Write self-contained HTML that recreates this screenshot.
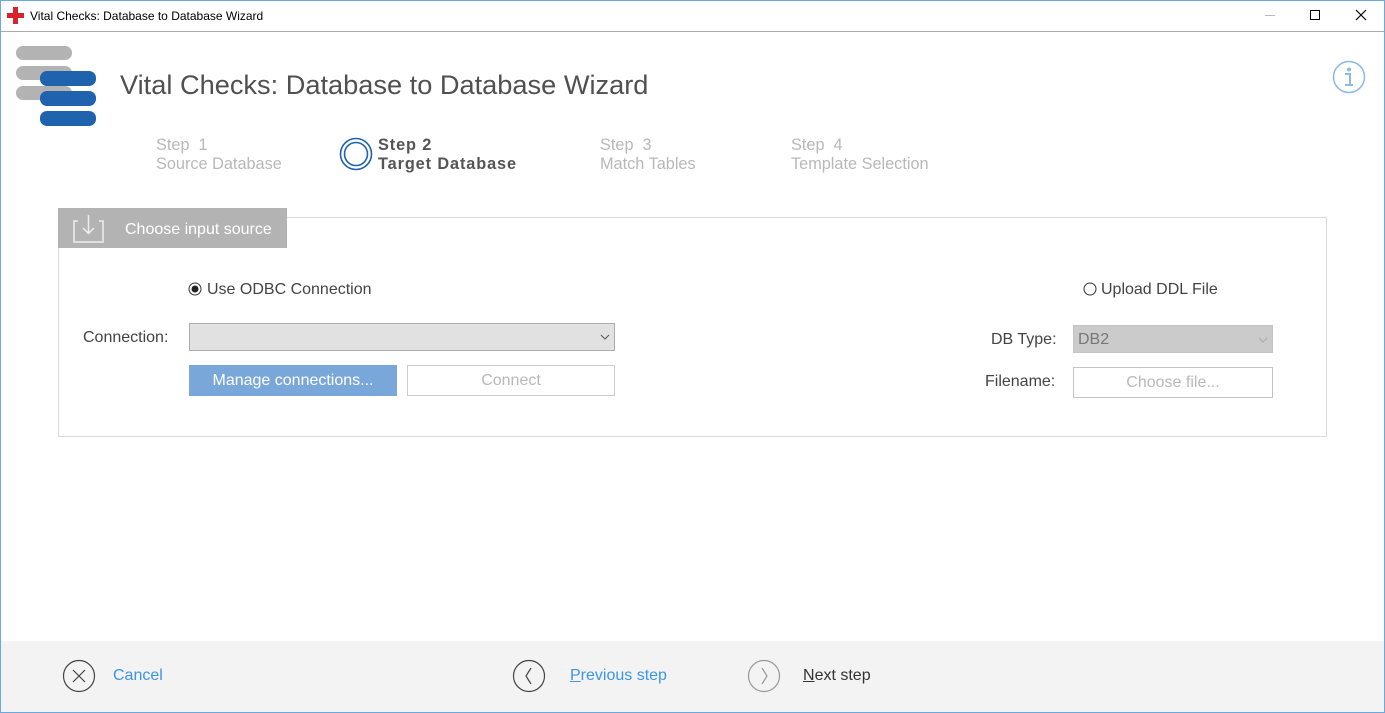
<!DOCTYPE html>
<html><head><meta charset="utf-8"><style>
*{margin:0;padding:0;box-sizing:border-box}
body{width:1385px;height:713px;position:relative;overflow:hidden;background:#fff;font-family:"Liberation Sans",Arial,sans-serif;}
.a{position:absolute;white-space:nowrap}
</style></head><body>
<div class="a" style="left:0;top:0;width:1385px;height:713px;border:1px solid #6aa8e0"></div>
<div class="a" style="left:1px;top:31px;width:1383px;height:1px;background:#ababab"></div>
<svg class="a" style="left:7px;top:7px" width="17" height="17"><rect x="6" y="0" width="5" height="17" fill="#d8232a"/><rect x="0" y="6" width="17" height="5" fill="#d8232a"/></svg>
<div class="a" style="left:30px;top:9px;font-size:12px;color:#000">Vital Checks: Database to Database Wizard</div>
<div class="a" style="left:1265px;top:15px;width:10px;height:1px;background:#bbb"></div>
<div class="a" style="left:1310px;top:10px;width:10px;height:10px;border:1px solid #000"></div>
<svg class="a" style="left:1355px;top:9px" width="12" height="12"><path d="M1 1L11 11M11 1L1 11" stroke="#000" stroke-width="1.2"/></svg>

<div class="a" style="left:16px;top:46px;width:56px;height:14px;border-radius:7px;background:#b3b3b3"></div>
<div class="a" style="left:16px;top:66px;width:56px;height:14px;border-radius:7px;background:#b3b3b3"></div>
<div class="a" style="left:16px;top:86px;width:56px;height:14px;border-radius:7px;background:#b3b3b3"></div>
<div class="a" style="left:40px;top:71px;width:56px;height:15px;border-radius:7px;background:#1f62ad"></div>
<div class="a" style="left:40px;top:91px;width:56px;height:15px;border-radius:7px;background:#1f62ad"></div>
<div class="a" style="left:40px;top:111px;width:56px;height:15px;border-radius:7px;background:#1f62ad"></div>
<div class="a" style="left:120px;top:69px;font-size:27.2px;color:#505050">Vital Checks: Database to Database Wizard</div>
<svg class="a" style="left:1332px;top:60px" width="34" height="34"><circle cx="17" cy="17" r="15.5" fill="none" stroke="#8ab9e6" stroke-width="1.5"/><circle cx="17" cy="9.5" r="2" fill="#8ab9e6"/><path d="M13 14h5v11h2M13 25h8" stroke="#8ab9e6" stroke-width="2" fill="none"/></svg>

<div class="a" style="left:156px;top:136px;font-size:16.3px;line-height:19px;color:#b8b8b8">Step&nbsp; 1<br>Source Database</div>
<svg class="a" style="left:339px;top:137px" width="34" height="34"><circle cx="17" cy="17" r="15.5" fill="none" stroke="#1f62ad" stroke-width="1.6"/><circle cx="17" cy="17" r="11.5" fill="none" stroke="#1f62ad" stroke-width="1.6"/></svg>
<div class="a" style="left:378px;top:136px;font-size:16.3px;line-height:19px;color:#555;font-weight:bold;letter-spacing:0.9px">Step 2<br>Target Database</div>
<div class="a" style="left:600px;top:136px;font-size:16.3px;line-height:19px;color:#b8b8b8">Step&nbsp; 3<br>Match Tables</div>
<div class="a" style="left:791px;top:136px;font-size:16.3px;line-height:19px;color:#b8b8b8">Step&nbsp; 4<br>Template Selection</div>

<div class="a" style="left:58px;top:217px;width:1269px;height:220px;border:1px solid #dadada"></div>
<div class="a" style="left:58px;top:208px;width:229px;height:40px;background:#b3b3b3"></div>
<svg class="a" style="left:72px;top:212px" width="34" height="32"><path d="M6 9H2V30H31V9H27" fill="none" stroke="#eee" stroke-width="1.5"/><path d="M16.5 3V21M11 16l5.5 5.5L22 16" fill="none" stroke="#eee" stroke-width="1.5"/></svg>
<div class="a" style="left:125px;top:221px;font-size:16px;color:#fff">Choose input source</div>

<svg class="a" style="left:188px;top:282px" width="14" height="14"><circle cx="7" cy="7" r="6" fill="#fff" stroke="#333"/><circle cx="7" cy="7" r="3.5" fill="#222"/></svg>
<div class="a" style="left:207px;top:281px;font-size:16px;color:#444">Use ODBC Connection</div>
<div class="a" style="left:83px;top:329px;font-size:16px;color:#444">Connection:</div>
<div class="a" style="left:189px;top:323px;width:426px;height:28px;background:#e1e1e1;border:1px solid #adadad"></div>
<svg class="a" style="left:600px;top:334px" width="10" height="6"><path d="M1 1l4 4 4-4" fill="none" stroke="#555"/></svg>
<div class="a" style="left:189px;top:365px;width:208px;height:31px;background:#7aa7d9;color:#fff;font-size:16px;text-align:center;line-height:32px">Manage connections...</div>
<div class="a" style="left:407px;top:365px;width:208px;height:31px;border:1px solid #ccc;color:#b8b8b8;font-size:16px;text-align:center;line-height:30px">Connect</div>

<svg class="a" style="left:1083px;top:282px" width="14" height="14"><circle cx="7" cy="7" r="6" fill="#fff" stroke="#333"/></svg>
<div class="a" style="left:1101px;top:281px;font-size:16px;color:#444">Upload DDL File</div>
<div class="a" style="left:991px;top:331px;font-size:16px;color:#444">DB Type:</div>
<div class="a" style="left:1073px;top:325px;width:200px;height:28px;background:#cbcbcb;border:1px solid #c4c4c4;color:#777;font-size:16px;line-height:28px;padding-left:4px">DB2</div>
<svg class="a" style="left:1258px;top:337px" width="10" height="6"><path d="M1 1l4 4 4-4" fill="none" stroke="#aaa"/></svg>
<div class="a" style="left:985px;top:373px;font-size:16px;color:#444">Filename:</div>
<div class="a" style="left:1073px;top:367px;width:200px;height:31px;border:1px solid #c4c4c4;color:#b8b8b8;font-size:16px;text-align:center;line-height:30px">Choose file...</div>

<div class="a" style="left:1px;top:641px;width:1383px;height:71px;background:#f3f3f3"></div>
<svg class="a" style="left:62px;top:659px" width="34" height="34"><circle cx="17" cy="17" r="15.5" fill="none" stroke="#444" stroke-width="1.2"/><path d="M11 11l12 12M23 11L11 23" stroke="#444" stroke-width="1.2"/></svg>
<div class="a" style="left:113px;top:667px;font-size:16px;color:#3c95e6">Cancel</div>
<svg class="a" style="left:512px;top:659px" width="34" height="34"><circle cx="17" cy="17" r="15.5" fill="none" stroke="#444" stroke-width="1.2"/><path d="M19 9l-5 8 5 8" fill="none" stroke="#444" stroke-width="1.2"/></svg>
<div class="a" style="left:570px;top:667px;font-size:16px;color:#3c95e6"><u>P</u>revious step</div>
<svg class="a" style="left:747px;top:659px" width="34" height="34"><circle cx="17" cy="17" r="15.5" fill="none" stroke="#999" stroke-width="1.2"/><path d="M15 9l5 8-5 8" fill="none" stroke="#999" stroke-width="1.2"/></svg>
<div class="a" style="left:803px;top:667px;font-size:16px;color:#333"><u>N</u>ext step</div>
</body></html>
